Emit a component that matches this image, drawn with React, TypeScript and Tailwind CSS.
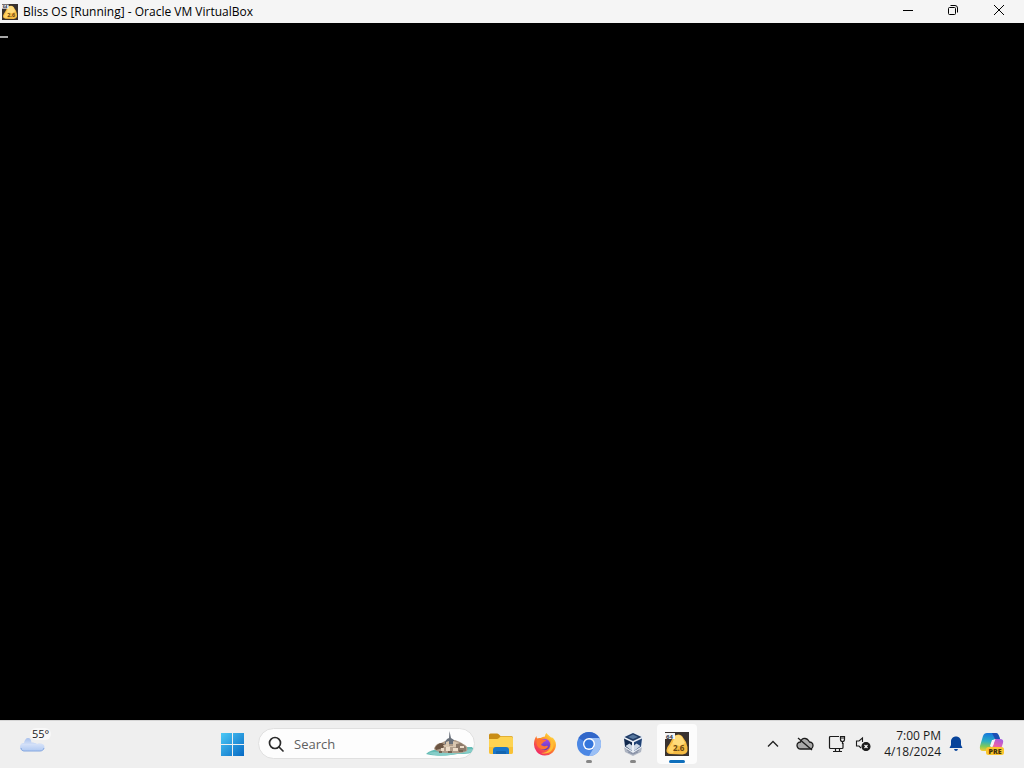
import type { ReactNode } from 'react';

// VM icon, shared by the title bar and the taskbar
function VmIcon({ className }: { className: string }) {
    return (
        <svg viewBox="0 0 24 24" className={className} aria-hidden="true">
            <rect width="24" height="24" fill="#39322f" />
            <path d="M9 4q5-3 8 0l4 6q2 5 1.500 9-1 3-5 3.500L5 22q-4-1-3.500-4 1-4 3-6 2-4 4.500-8z" fill="#f6bb42" />
            <path d="M10 4q4-2.500 7 1l3 6-5 3-8-2z" fill="#ffdc7c" />
            <path d="m3 18 4-7 5 2-4 8-4-.5z" fill="#ffd367" />
            <rect x="0" y="1" width="10" height="6" fill="#f4f4f4" />
            <text x="1" y="6.500" fontSize="6" fontWeight="700" fill="#2c3346">64</text>
            <text x="8" y="19" fontSize="8" fontWeight="700" fill="#6a4614">2.6</text>
        </svg>
    );
}

function WeatherIcon() {
    return (
        <svg viewBox="0 0 26 16" className="h-4 w-[26px]" aria-hidden="true">
            <defs>
                <linearGradient id="cloud" x1="0" y1="0" x2="0" y2="1">
                    <stop offset="0" stopColor="#a9c1ec" />
                    <stop offset=".5" stopColor="#d3e0f8" />
                    <stop offset="1" stopColor="#b0c9f2" />
                </linearGradient>
            </defs>
            <path d="M4 15a4 4 0 0 1 0-8C4.500 4 6 2 8 2c2.500 0 3 2 3.500 4.500 2 0 4.500.5 5.500 1.500 3-1 7.500-.5 7.500 3 0 2.500-2 4-4 4z" fill="url(#cloud)" />
            <path d="M1 12c.5 2 1.500 3 3 3h16c2 0 3.500-1 4-3" fill="none" stroke="#86a8e0" />
        </svg>
    );
}

function StartIcon() {
    return (
        <svg viewBox="0 0 24 24" className="size-6" aria-hidden="true">
            <defs>
                <linearGradient id="win" gradientUnits="userSpaceOnUse" x1="0" y1="0" x2="24" y2="24">
                    <stop offset="0" stopColor="#4fcdf8" />
                    <stop offset="1" stopColor="#0669c4" />
                </linearGradient>
            </defs>
            <path d="M1 1h11v11H1zM13 1h11v11H13zM1 13h11v11H1zM13 13h11v11H13z" fill="url(#win)" />
        </svg>
    );
}

function SearchIcon() {
    return (
        <svg viewBox="0 0 16 16" className="size-4 shrink-0" fill="none" stroke="#2b2b2b" strokeWidth="1.7" strokeLinecap="round" aria-hidden="true">
            <circle cx="7" cy="7" r="5.500" />
            <path d="m11 11 4 4" />
        </svg>
    );
}

// Island with an abbey, the daily picture of the search box
function IslandArt() {
    return (
        <svg viewBox="0 0 48 26" className="h-[26px] w-12 shrink-0" aria-hidden="true">
            <path d="M0 23c3-3 7-4 12-5l25-2h9q3 3 1 5c-5 3-13 1-22 3-9 1-18 1-25-1z" fill="#66bcb5" />
            <path d="M2 22c7-2 13 0 20 0s15-3 24-4q1 2 0 3c-7 2-13 1-22 3-8 1-16 1-22-2z" fill="#86cdc8" />
            <path d="M8 18c1-4 4-6 7-6l6-3h8l5 2 5 3c2 1 3 3 2 6-5 3-12 2-17 2-6 0-12 0-16-4z" fill="#b09d8a" />
            <path d="m19 11 2-3 2-1 .5-7 1.500 7 3 2v4h-9z" fill="#69707a" />
            <path d="M9 17c1-3 4-5 7-5l3 2-2 3-7 2z" fill="#6c5442" />
            <path d="M17 14h3v-3l3-1v5h4v-5l6 2v4H18z" fill="#d9c6af" />
            <path d="m30 13 5-1 5 4v4l-7 1-3-3z" fill="#8d7a6a" />
            <path d="M20 16h4v4h-4zM27 17h5v3h-5zM15 17h3v3h-3zM34 15h4v2h-4z" fill="#eddcc8" />
            <path d="M13 20h3v2h-3zM22 20h4v2h-4zM33 19h4v2h-4z" fill="#766352" />
        </svg>
    );
}

function FolderIcon() {
    return (
        <svg viewBox="0 0 26 24" className="h-6 w-[26px]" aria-hidden="true">
            <path d="M1 3q0-1.500 1.500-1.500H9q1 0 2 1L12.500 4H23q2 0 2 2v6H1z" fill="#c98d16" />
            <path d="M1 7h8q1 0 2-1l1.500-1.500H23q2 0 2 2V20q0 2-2 2H3q-2 0-2-2z" fill="#fdd352" />
            <path d="M1 15h24v5q0 2-2 2H3q-2 0-2-2z" fill="#f8c136" />
            <path d="M5 22v-4q0-3 3-3h10q3 0 3 3v4z" fill="#1976c9" />
            <path d="M8 22v-2q0-1 1-1h8q1 0 1 1v2z" fill="#1465b0" />
        </svg>
    );
}

function FirefoxIcon() {
    return (
        <svg viewBox="0 0 24 24" className="size-6" aria-hidden="true">
            <defs>
                <linearGradient id="fox" x1=".85" y1=".1" x2=".2" y2=".9">
                    <stop offset="0" stopColor="#ffdf3e" />
                    <stop offset=".45" stopColor="#ff8a25" />
                    <stop offset="1" stopColor="#f02865" />
                </linearGradient>
                <linearGradient id="globe" x1="0" y1="0" x2="0" y2="1">
                    <stop offset="0" stopColor="#a64be8" />
                    <stop offset="1" stopColor="#593bb7" />
                </linearGradient>
            </defs>
            <path d="M3.500 4c0 1.500.3 2 1 2.500 1-.5 2-.5 3-.5 1.500-1 3-1.500 4.500-1.500 0-1.500.5-2.500 1.500-3.500 1 2 3 2.500 5 5v-1c3 2 4.500 4.500 4.500 8A11 11 0 1 1 1 12c0-3 .8-6 2.500-8z" fill="url(#fox)" />
            <path d="M17 6c4 3 5 8 2 12-3 4-8 4-11 3 8 0 12-6 9-15z" fill="#ffbd35" />
            <circle cx="11.500" cy="12.500" r="5.700" fill="url(#globe)" />
            <path d="M4 8c2-2 4-2 5.500-.5l3.500.5c0 1-1 1.500-2.500 2-.5 1.500-2 1.500-2.500 3 1.500 1 3 1.500 4.500 1 1.500-.3 2-.3 2.500.5-1 2.500-5 4-8 2C4 15 3 12 4 8z" fill="#ff7430" />
        </svg>
    );
}

function ChromiumIcon() {
    return (
        <svg viewBox="0 0 24 24" className="size-6" aria-hidden="true">
            <circle cx="12" cy="12" r="12" fill="#4b87e4" />
            <path d="M12 12 1.600 6A12 12 0 0 1 22.400 6z" fill="#3267c9" />
            <path d="M12 6h10.400A12 12 0 0 1 12 24l5.200-9z" fill="#9abff5" />
            <circle cx="12" cy="12" r="6" fill="#fff" />
            <circle cx="12" cy="12" r="4.600" fill="#3476dc" />
        </svg>
    );
}

function VirtualBoxIcon() {
    return (
        <svg viewBox="0 0 22 24" className="h-6 w-[22px]" aria-hidden="true">
            <path d="m2 15 9 5 9-5-1 5-8 4-8-4z" fill="#aeb5c2" />
            <path d="m5 18 6 3 6-3M6 20l5 2 5-2" fill="none" stroke="#78839a" strokeWidth=".8" />
            <path d="M11 0 21 4.500 20 15l-9 6-9-6L1 4.500z" fill="#e9eef5" />
            <path d="m11 1 8.500 4L11 9 2.500 5z" fill="#1f3a64" />
            <path d="m11 2.500 5 2.500-5 2-5-2z" fill="#56779f" />
            <path d="m2 6.500 8 3.700V19l-7-4.500z" fill="#10284c" />
            <path d="m20 6.500-8 3.700V19l7-4.500z" fill="#1f4174" />
            <path d="m3.500 14 4-2.500 2.500 2V19zM18.500 14l-4-2.500-2.500 2V19z" fill="#cbd6e4" />
        </svg>
    );
}

function CopilotIcon() {
    return (
        <svg viewBox="0 0 26 26" className="size-[26px]" aria-hidden="true">
            <defs>
                <linearGradient id="copA" x1=".3" y1="0" x2=".2" y2="1">
                    <stop offset="0" stopColor="#1677dc" />
                    <stop offset=".45" stopColor="#2aafc4" />
                    <stop offset=".75" stopColor="#83c956" />
                    <stop offset="1" stopColor="#f3cd35" />
                </linearGradient>
                <linearGradient id="copB" x1=".8" y1="0" x2=".3" y2="1">
                    <stop offset="0" stopColor="#a45ce2" />
                    <stop offset=".5" stopColor="#e860ac" />
                    <stop offset="1" stopColor="#ff8b60" />
                </linearGradient>
            </defs>
            <path d="M8 2h9q2 0 3 3l1 3h-5q-2 0-3 3l-2 6q-1 3-4 3H4q-4 0-3-5L4 5q1-3 4-3z" fill="url(#copA)" />
            <path d="M13 2h4q2 0 3 3l1 3h-5z" fill="#1c4fb3" />
            <path d="M17 8h4q4 0 3 4l-2 6q-1 3-4 3H9q3 0 4-3l2-7q.500-3 2-3z" fill="url(#copB)" />
            <path d="M13 9h3l-2 6h-3z" fill="#f6f5f8" />
            <rect x="7" y="16" width="18" height="8" rx="2.500" fill="#fac52d" />
            <text x="16" y="22.500" textAnchor="middle" fontSize="7" fontWeight="800" fill="#41310c">PRE</text>
        </svg>
    );
}

interface TaskButtonProps {
    label: string;
    children: ReactNode;
    state?: 'running' | 'active';
}

function TaskButton({ label, children, state }: TaskButtonProps) {
    return (
        <button
            type="button"
            aria-label={label}
            className={`flex h-10 w-10 shrink-0 flex-col items-center justify-end rounded pb-px ${state === 'active' ? 'bg-[#fcfcfc]' : ''}`}
        >
            {children}
            <span
                className={`mt-1 h-[3px] rounded-full ${state === 'active' ? 'w-4 bg-[#0f6fbc]' : state === 'running' ? 'w-1.5 bg-[#868686]' : 'w-1.5'}`}
            />
        </button>
    );
}

function TitleBar() {
    return (
        <header className="flex h-[23px] shrink-0 items-center bg-[#f5f5f5] pr-0.5">
            <VmIcon className="ml-0.5 size-4 shrink-0" />
            <h1 className="ml-[5px] flex-1 truncate text-[12px] leading-4 text-black">Bliss OS [Running] - Oracle VM VirtualBox</h1>
            <div className="flex h-full shrink-0 pb-0.5">
                <button type="button" aria-label="Minimize" className="flex w-[45px] items-center justify-center">
                    <svg viewBox="0 0 12 12" className="size-3" fill="none" stroke="#000"><path d="M1 5.500h10" /></svg>
                </button>
                <button type="button" aria-label="Restore" className="flex w-[45px] items-center justify-center">
                    <svg viewBox="0 0 12 12" className="size-3" fill="none" stroke="#000">
                        <rect x="1.500" y="2.500" width="7" height="7" rx="1" />
                        <path d="M3.500.5H8q2.500 0 2.500 2.500v4.500" />
                    </svg>
                </button>
                <button type="button" aria-label="Close" className="flex w-[47px] items-center justify-center">
                    <svg viewBox="0 0 12 12" className="size-3" fill="none" stroke="#000"><path d="m1 0 10 10M11 0 1 10" /></svg>
                </button>
            </div>
        </header>
    );
}

function Tray() {
    return (
        <div className="ml-auto flex shrink-0 items-center pr-[19px]">
            <button type="button" aria-label="Show hidden icons" className="flex h-8 w-8 items-center justify-center">
                <svg viewBox="0 0 12 12" className="size-3" fill="none" stroke="#222" strokeWidth="1.300"><path d="m1 8.500 5-5 5 5" /></svg>
            </button>
            <button type="button" aria-label="OneDrive" className="flex h-8 w-8 items-center justify-center">
                <svg viewBox="0 0 18 16" className="h-4 w-[18px]" stroke="#1b1b1b" strokeWidth="1.300">
                    <path d="M4.500 13a3.500 3.500 0 0 1 0-7C5.500 3 7.500 2 9.500 2.500 12 3 12.500 4.500 13.500 6a3.500 3.500 0 0 1 0 7z" fill="#a9a9a9" />
                    <path d="m2 2 14 12" fill="none" />
                </svg>
            </button>
            <button type="button" aria-label="Network" className="flex h-8 w-8 items-center justify-center">
                <svg viewBox="0 0 18 18" className="size-[18px]" fill="none" stroke="#1b1b1b" strokeWidth="1.200">
                    <path d="M11 1.500H2.500q-1 0-1 1v10q0 1 1 1H14q1 0 1-1V8M5 16.500h9M7.500 13.500v3M11.500 13.500v3" />
                    <path d="M12.500 1.500h4v3q0 2-2 2t-2-2zM12.500 3h4M14.500 6.500V9" />
                </svg>
            </button>
            <button type="button" aria-label="Volume muted" className="flex h-8 w-5 items-center justify-center">
                <svg viewBox="0 0 16 16" className="size-4" fill="none" stroke="#1b1b1b" strokeWidth="1.100">
                    <path d="M7.500 6V2L4 5H1.500v5H4l2 2" />
                    <circle cx="11" cy="10.500" r="4" fill="#1b1b1b" />
                    <path d="m9.500 9 3 3M12.500 9l-3 3" stroke="#fff" />
                </svg>
            </button>
            <button type="button" aria-label="Date and time" className="ml-1.5 w-[62px] text-right text-[12px] leading-4 text-[#1b1b1b]">
                <time dateTime="2024-04-18T19:00">
                    7:00 PM<br />4/18/2024
                </time>
            </button>
            <button type="button" aria-label="Notifications" className="ml-1.5 flex h-8 w-[18px] items-center justify-center">
                <svg viewBox="0 0 16 16" className="size-4" fill="#07439a">
                    <path d="M8 .5c-3 0-5 2.200-5 5V9l-1.500 3h13L13 9V5.500c0-2.800-2-5-5-5zM6 13h4q-.5 2-2 2t-2-2z" />
                </svg>
            </button>
            <button type="button" aria-label="Copilot" className="ml-3.5">
                <CopilotIcon />
            </button>
        </div>
    );
}

function Taskbar() {
    return (
        <footer className="flex h-12 shrink-0 items-center border-t border-[#d5d5d5] bg-[#efefef] pb-0.5">
            <div className="w-[212px] shrink-0">
                <button type="button" aria-label="Weather, 55 degrees" className="relative ml-5 flex h-8 w-8 items-end pb-2">
                    <WeatherIcon />
                    <span className="absolute top-0 left-2.5 rounded-full bg-[#f8f8f8] px-0.5 text-[11px] leading-3 text-[#1b1b1b]">55°</span>
                </button>
            </div>
            <nav aria-label="Taskbar" className="flex shrink-0 items-center gap-1">
                <button type="button" aria-label="Start" className="flex size-10 items-center justify-center">
                    <StartIcon />
                </button>
                <label className="mr-0.5 ml-0.5 flex h-[31px] w-[217px] items-center overflow-hidden rounded-full border border-[#e0e0e0] bg-[#fdfdfd] pl-[9px]">
                    <SearchIcon />
                    <input type="search" aria-label="Search" placeholder="Search" className="ml-2.5 min-w-0 flex-1 bg-transparent text-[13px] leading-5 outline-none placeholder:text-[#606060]" />
                    <IslandArt />
                </label>
                <TaskButton label="File Explorer"><FolderIcon /></TaskButton>
                <TaskButton label="Firefox"><FirefoxIcon /></TaskButton>
                <TaskButton label="Chromium" state="running"><ChromiumIcon /></TaskButton>
                <TaskButton label="Oracle VM VirtualBox" state="running"><VirtualBoxIcon /></TaskButton>
                <TaskButton label="Bliss OS" state="active"><VmIcon className="size-6" /></TaskButton>
            </nav>
            <Tray />
        </footer>
    );
}

export default function App() {
    return (
        <div className="flex min-h-screen flex-col bg-black font-['Open_Sans','Noto_Sans',sans-serif]">
            <TitleBar />
            {/* Guest display, only the boot cursor is visible */}
            <main aria-label="Guest display" className="flex-1 bg-black pt-[13px]">
                <div className="h-0.5 w-2 bg-[#a8a8a8]" />
            </main>
            <Taskbar />
        </div>
    );
}
